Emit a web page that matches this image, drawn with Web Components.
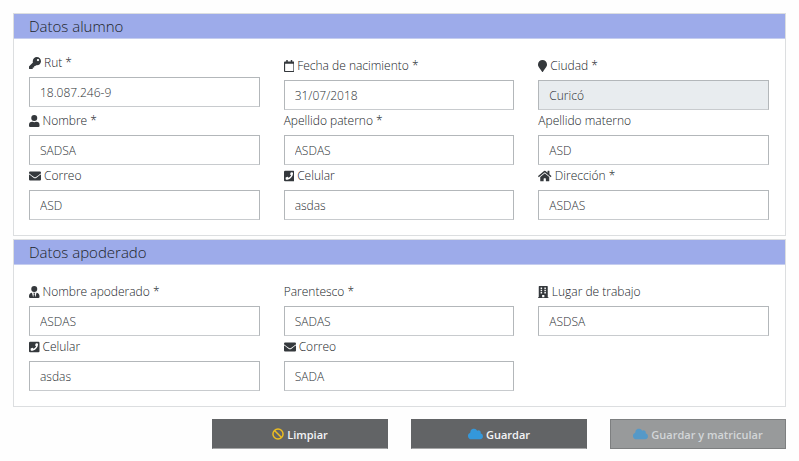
<!DOCTYPE html>
<html lang="es">
<head>
<meta charset="utf-8">
<title>Matrícula</title>
<style>
body { margin: 0; background: #fefefe; color: #202428; font: 300 12px/21px "Open Sans", "Noto Sans", sans-serif; }
</style>
</head>
<body>
<student-form></student-form>
<script>
const ICONS = {
  key: ['0 0 512 512', '<path d="M512 176c0 97.200-78.800 176-176 176-11.220 0-22.190-1.062-32.827-3.069l-24.012 27.014A24 24 0 0 1 261.223 384H224v40c0 13.255-10.745 24-24 24h-40v40c0 13.255-10.745 24-24 24H24c-13.255 0-24-10.745-24-24v-78.059c0-6.365 2.529-12.470 7.029-16.971l161.802-161.802C163.108 213.814 160 195.271 160 176 160 78.798 238.797 0 336 0c97.488 0 176 78.511 176 176zM336 128c0 26.510 21.490 48 48 48s48-21.490 48-48-21.490-48-48-48-48 21.490-48 48z"/>'],
  calendar: ['0 0 448 512', '<path fill-rule="evenodd" d="M400 64h-48V12c0-6.600-5.400-12-12-12h-40c-6.600 0-12 5.400-12 12v52H160V12c0-6.600-5.400-12-12-12h-40c-6.600 0-12 5.400-12 12v52H48C21.500 64 0 85.500 0 112v352c0 26.500 21.500 48 48 48h352c26.500 0 48-21.500 48-48V112c0-26.500-21.500-48-48-48zm-6 400H54c-3.300 0-6-2.700-6-6V160h352v298c0 3.300-2.700 6-6 6z"/>'],
  pin: ['0 0 384 512', '<path d="M172 502C27 291 0 270 0 192a192 192 0 0 1 384 0c0 78-27 99-172 310-10 13-30 13-40 0z"/>'],
  user: ['0 0 448 512', '<path d="M224 256a128 128 0 1 0 0-256 128 128 0 0 0 0 256zm90 32h-17a174 174 0 0 1-146 0h-17A134 134 0 0 0 0 422v42a48 48 0 0 0 48 48h352a48 48 0 0 0 48-48v-42a134 134 0 0 0-134-134z"/>'],
  tie: ['0 0 448 512', '<path d="M224 256a128 128 0 1 0 0-256 128 128 0 0 0 0 256zm96 33-48 191-32-136 32-56h-96l32 56-32 136-48-191C57 292 0 350 0 422v42a48 48 0 0 0 48 48h352a48 48 0 0 0 48-48v-42c0-72-57-130-128-133z"/>'],
  mail: ['0 0 512 512', '<path d="M502 191c4-3 10 0 10 5v204a48 48 0 0 1-48 48H48a48 48 0 0 1-48-48V196c0-5 6-8 10-5 22 17 52 40 155 114 21 16 57 48 91 48 35 0 72-33 91-48 103-74 133-97 155-114zM256 320c23 0 57-29 73-41 133-97 143-105 174-129 6-5 9-12 9-19v-19a48 48 0 0 0-48-48H48a48 48 0 0 0-48 48v19c0 7 3 14 9 19 31 24 41 32 174 129 16 12 50 41 73 41z"/>'],
  phone: ['0 0 448 512', '<path fill-rule="evenodd" d="M400 32H48A48 48 0 0 0 0 80v352a48 48 0 0 0 48 48h352a48 48 0 0 0 48-48V80a48 48 0 0 0-48-48zM94 416c-7 0-13-5-15-12l-14-65c-1-7 2-14 9-17l70-30c6-3 14-1 18 4l31 38c49-23 88-63 110-110l-38-31c-5-4-7-12-4-18l30-70c3-7 10-10 17-9l65 15c7 2 12 8 12 15 0 160-130 290-291 290z"/>'],
  home: ['0 0 576 512', '<path d="M280 148 96 300v164a16 16 0 0 0 16 16h112a16 16 0 0 0 16-16v-96a16 16 0 0 1 16-16h64a16 16 0 0 1 16 16v96a16 16 0 0 0 16 16h112a16 16 0 0 0 16-16V300L296 148a12 12 0 0 0-16 0zm292 103-84-69V44a12 12 0 0 0-12-12h-56a12 12 0 0 0-12 12v72l-90-74a48 48 0 0 0-61 0L4 251a12 12 0 0 0-1 17l25 31a12 12 0 0 0 17 2l235-194a12 12 0 0 1 16 0l235 194a12 12 0 0 0 17-2l25-31a12 12 0 0 0-1-17z"/>'],
  building: ['0 0 448 512', '<path fill-rule="evenodd" d="M436 480h-20V24a24 24 0 0 0-24-24H56a24 24 0 0 0-24 24v456H12a12 12 0 0 0-12 12v20h448v-20a12 12 0 0 0-12-12zM112 64h64v64h-64zm0 96h64v64h-64zm0 96h64v64h-64zm160 224h-96v-96h96zm64-160h-64v-64h64zm0-96h-64v-64h64zm0-96h-64V64h64z"/>'],
  ban: ['0 0 512 512', '<path fill-rule="evenodd" d="M256 8a248 248 0 1 0 0 496 248 248 0 0 0 0-496zm130 118c66 66 69 165 21 235L151 105c70-48 169-45 235 21zM126 386c-66-66-69-165-21-235l256 256c-70 48-169 45-235-21z"/>'],
  cloud: ['0 0 640 512', '<path d="M537 227a96 96 0 0 0-142-115A160 160 0 0 0 96 200 144 144 0 0 0 144 480h368a128 128 0 0 0 25-253z"/>']
};

customElements.define('fa-icon', class extends HTMLElement {
  connectedCallback() {
    const [box, shape] = ICONS[this.getAttribute('name')];
    this.attachShadow({ mode: 'open' }).innerHTML = `
      <style>
        :host { display: inline-flex; flex: none; }
        svg { height: 12px; fill: currentColor; }
      </style>
      <svg viewBox="${box}" style="aspect-ratio:${box.split(' ')[2]}/512" aria-hidden="true">${shape}</svg>`;
  }
});

customElements.define('form-field', class extends HTMLElement {
  connectedCallback() {
    const icon = this.getAttribute('icon');
    this.attachShadow({ mode: 'open' }).innerHTML = `
      <style>
        :host { display: block; min-width: 0; }
        :host([raised]) { padding-bottom: 3px; }
        label { display: flex; align-items: center; gap: 3px; margin-bottom: 4px; }
        input {
          display: block; box-sizing: border-box; width: 100%; height: 30px; margin: 0;
          padding: 0 10px; border: 1px solid #b3b7ba; border-radius: 0;
          border-bottom-color: #c8cbce;
          background: #fff; color: #2c3034; font: inherit; outline: 0;
        }
        input:disabled { background: #e8ecef; color: #2c3034; opacity: 1; }
        fa-icon { color: #34383c; }
      </style>
      <label for="field">${icon ? `<fa-icon name="${icon}"></fa-icon>` : ''}<span><slot></slot></span></label>
      <input id="field" type="text" value="${this.getAttribute('value')}" ${this.hasAttribute('disabled') ? 'disabled' : ''}>`;
  }
});

customElements.define('form-card', class extends HTMLElement {
  connectedCallback() {
    this.attachShadow({ mode: 'open' }).innerHTML = `
      <style>
        :host { display: block; box-sizing: border-box; border: 1px solid #dcdee0; background: #fff; }
        h2 {
          margin: 0; padding: 1px 15px 0; border-bottom: 1px solid #c5cdef;
          background: #9dabea; color: #202428; font-size: 15px; line-height: 23px; font-weight: 300;
        }
        .fields {
          display: grid; grid-template-columns: repeat(3, minmax(0, 1fr));
          column-gap: 24px; align-items: end; padding: var(--top, 16px) 16px 15px 15px;
        }
      </style>
      <h2>${this.getAttribute('heading')}</h2>
      <div class="fields"><slot></slot></div>`;
  }
});

customElements.define('action-button', class extends HTMLElement {
  connectedCallback() {
    this.attachShadow({ mode: 'open' }).innerHTML = `
      <style>
        :host { display: block; }
        button {
          display: flex; align-items: center; justify-content: center; gap: 3px;
          box-sizing: border-box; width: 100%; height: 30px; margin: 0; padding: 0 8px;
          border: 1px solid #626466; border-bottom-color: #a5a6a7; border-radius: 0;
          background: #626466; color: #f4f5f6; font: inherit; font-size: 11px; font-weight: 600;
        }
        button:disabled { background: #989a9b; border-color: #7d7f80; color: #d3d6d8; }
        fa-icon { color: var(--tint); }
      </style>
      <button type="button" ${this.hasAttribute('disabled') ? 'disabled' : ''}><fa-icon name="${this.getAttribute('icon')}"></fa-icon><span><slot></slot></span></button>`;
  }
});

customElements.define('student-form', class extends HTMLElement {
  connectedCallback() {
    this.attachShadow({ mode: 'open' }).innerHTML = `
      <style>
        :host { display: block; padding: 13px 13px 12px; }
        form { display: grid; gap: 3px; }
        .first { --top: 13px; }
        .actions {
          display: grid; grid-template-columns: repeat(4, minmax(0, 1fr));
          gap: 23px; margin-top: 9px;
        }
        .actions :first-child { grid-column-start: 2; }
        .clear { --tint: #edbd20; }
        .save { --tint: #3498db; }
        .enroll { --tint: #5599c8; }
      </style>
      <form>
        <form-card class="first" heading="Datos alumno">
          <form-field icon="key" value="18.087.246-9" raised>Rut *</form-field>
          <form-field icon="calendar" value="31/07/2018">Fecha de nacimiento *</form-field>
          <form-field icon="pin" value="Curicó" disabled>Ciudad *</form-field>
          <form-field icon="user" value="SADSA">Nombre *</form-field>
          <form-field value="ASDAS">Apellido paterno *</form-field>
          <form-field value="ASD">Apellido materno</form-field>
          <form-field icon="mail" value="ASD">Correo</form-field>
          <form-field icon="phone" value="asdas">Celular</form-field>
          <form-field icon="home" value="ASDAS">Dirección *</form-field>
        </form-card>
        <form-card heading="Datos apoderado">
          <form-field icon="tie" value="ASDAS">Nombre apoderado *</form-field>
          <form-field value="SADAS">Parentesco *</form-field>
          <form-field icon="building" value="ASDSA">Lugar de trabajo</form-field>
          <form-field icon="phone" value="asdas">Celular</form-field>
          <form-field icon="mail" value="SADA">Correo</form-field>
        </form-card>
        <div class="actions">
          <action-button class="clear" icon="ban">Limpiar</action-button>
          <action-button class="save" icon="cloud">Guardar</action-button>
          <action-button class="enroll" icon="cloud" disabled>Guardar y matricular</action-button>
        </div>
      </form>`;
  }
});
</script>
</body>
</html>
